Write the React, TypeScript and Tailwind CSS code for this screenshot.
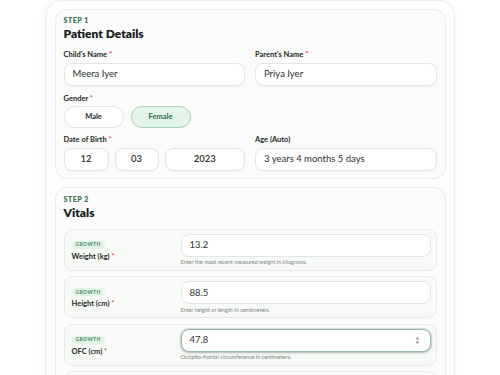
import React from 'react';

const Req = () => <span className="text-[#d9534f]"> *</span>;

const Label = ({ children, req }: { children: React.ReactNode; req?: boolean }) => (
  <div className="text-[7.5px] font-bold text-[#1f2a22] leading-none mb-[4px]">
    {children}
    {req && <Req />}
  </div>
);

const TextBox = ({ value, center }: { value: string; center?: boolean }) => (
  <div
    className={`h-[23px] rounded-[8px] border border-[#e3e7e3] bg-white flex items-center text-[9.5px] text-[#2b332d] leading-none shadow-[0_1px_1px_rgba(0,0,0,0.03)] ${
      center ? 'justify-center font-semibold' : 'px-[8px]'
    }`}
  >
    {value}
  </div>
);

const StepHead = ({ step, title, mb }: { step: string; title: string; mb: string }) => (
  <div className={mb}>
    <div className="text-[7px] font-extrabold tracking-[0.08em] text-[#3a7750] leading-none">{step}</div>
    <div className="text-[12px] font-extrabold text-[#16201a] leading-none mt-[4px]">{title}</div>
  </div>
);

type Vital = { label: string; value: string; help: string; focus?: boolean };

const vitals: Vital[] = [
  { label: 'Weight (kg)', value: '13.2', help: 'Enter the most recent measured weight in kilograms.' },
  { label: 'Height (cm)', value: '88.5', help: 'Enter height or length in centimeters.' },
  { label: 'OFC (cm)', value: '47.8', help: 'Occipito-frontal circumference in centimeters.', focus: true },
  { label: 'MUAC (cm)', value: '14.6', help: 'Mid-upper arm circumference in centimeters.' },
];

const VitalRow = ({ v }: { v: Vital }) => (
  <div className="h-[42px] shrink-0 overflow-hidden rounded-[9px] border border-[#e6ebe6] bg-[#f8faf8] pl-[7px] pr-[5px] pt-[4px] grid grid-cols-[102px_1fr] gap-[7px] leading-none">
    <div className="pt-[7px]">
      <div className="w-fit rounded-[4px] bg-[#e2f4e8] px-[4px] py-[1.5px] text-[5px] font-bold tracking-[0.08em] text-[#4a8a60] leading-none">
        GROWTH
      </div>
      <div className="mt-[4px] text-[7.5px] font-bold text-[#1f2a22] leading-none">
        {v.label}
        <Req />
      </div>
    </div>
    <div>
      <div
        className={`h-[23px] rounded-[8px] bg-white flex items-center justify-between px-[8px] text-[9.5px] text-[#2b332d] ${
          v.focus
            ? 'border border-[#9bb7a3] shadow-[0_1px_3px_rgba(40,70,50,0.25),0_0_0_1px_rgba(160,190,170,0.35)]'
            : 'border border-[#e3e7e3]'
        }`}
      >
        <span>{v.value}</span>
        {v.focus && (
          <svg width="5" height="9" viewBox="0 0 5 9" className="mr-[2px]">
            <path d="M2.5 1 L4.3 3.4 L0.7 3.4 Z" fill="#8a8f8b" />
            <path d="M2.5 8 L4.3 5.6 L0.7 5.6 Z" fill="#8a8f8b" />
          </svg>
        )}
      </div>
      <div className="mt-[3.5px] text-[5.5px] text-[#7d857f] leading-none whitespace-nowrap">{v.help}</div>
    </div>
  </div>
);

export default function App() {
  return (
    <div className="w-[500px] h-[375px] overflow-hidden bg-white" style={{ fontFamily: 'Lato, "Noto Sans", sans-serif' }}>
      <div className="mx-auto w-[409px] rounded-[16px] border border-[#eceeec] bg-[#fdfdfd] p-[8px] shadow-[-2px_-2px_6px_rgba(120,170,140,0.12)]">
        <div className="rounded-[12px] border border-[#e9ece9] bg-[#fafbfa] px-[8px] pt-[7px] pb-[7px]">
          <StepHead step="STEP 1" title="Patient Details" mb="mb-[11px]" />
          <div className="grid grid-cols-2 gap-x-[10px]">
            <div>
              <Label req>Child's Name</Label>
              <TextBox value="Meera Iyer" />
            </div>
            <div>
              <Label req>Parent's Name</Label>
              <TextBox value="Priya Iyer" />
            </div>
          </div>
          <div className="mt-[9px]">
            <Label req>Gender</Label>
            <div className="flex gap-[7px]">
              <div className="w-[60px] h-[22px] rounded-full border border-[#e3e7e3] bg-white flex items-center justify-center text-[7.5px] font-bold text-[#222b25]">
                Male
              </div>
              <div className="w-[60px] h-[22px] rounded-full border border-[#a9d5b6] bg-[#e3f5e9] flex items-center justify-center text-[7.5px] font-bold text-[#2e6a43]">
                Female
              </div>
            </div>
          </div>
          <div className="grid grid-cols-2 gap-x-[10px] mt-[8px]">
            <div>
              <Label req>Date of Birth</Label>
              <div className="grid grid-cols-[45px_44px_1fr] gap-[6px]">
                <TextBox value="12" center />
                <TextBox value="03" center />
                <TextBox value="2023" center />
              </div>
            </div>
            <div>
              <Label>Age (Auto)</Label>
              <TextBox value="3 years 4 months 5 days" />
            </div>
          </div>
        </div>
        <div className="mt-[8px] rounded-[12px] border border-[#e9ece9] bg-[#fafbfa] px-[8px] pt-[8px] pb-[8px]">
          <StepHead step="STEP 2" title="Vitals" mb="mb-[10px]" />
          <div className="flex flex-col gap-[5.5px]">
            {vitals.map(v => (
              <VitalRow key={v.label} v={v} />
            ))}
          </div>
        </div>
      </div>
    </div>
  );
}
